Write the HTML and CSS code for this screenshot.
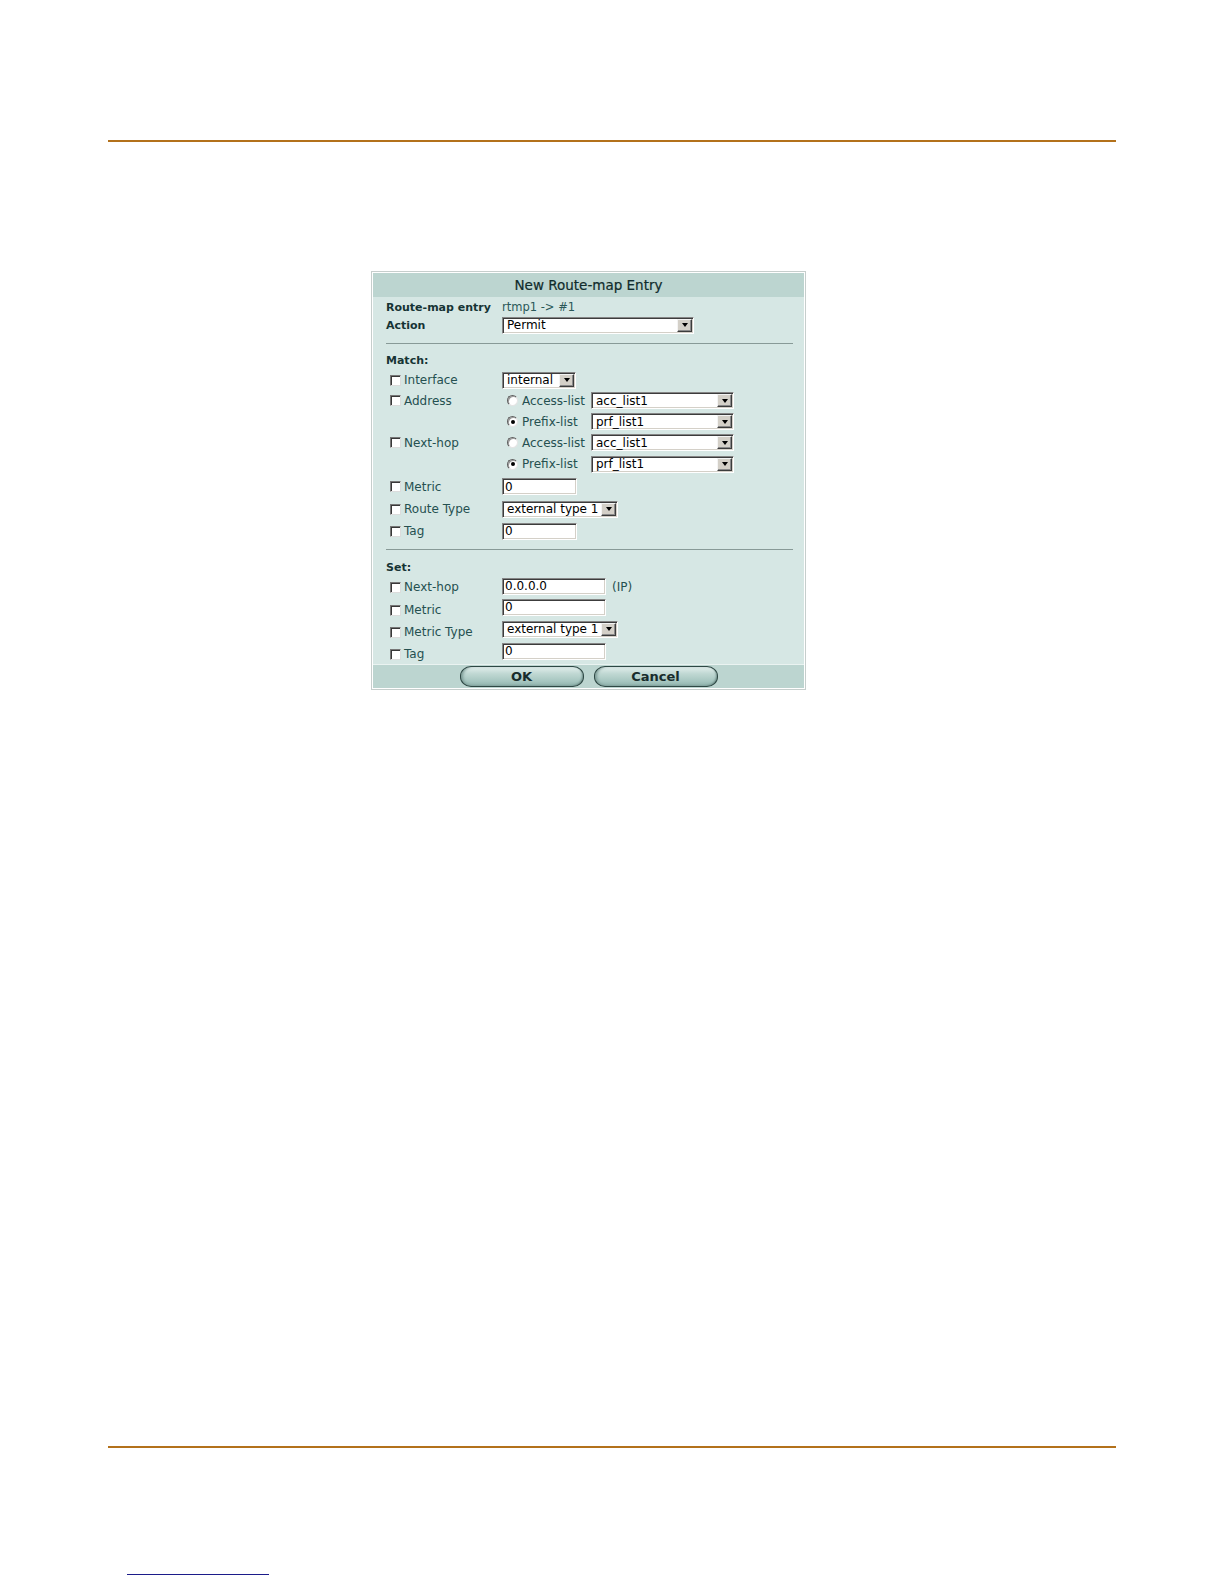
FILE: index.html
```html
<!DOCTYPE html>
<html>
<head>
<meta charset="utf-8">
<title>New Route-map Entry</title>
<link rel="stylesheet" href="styles.css">
</head>
<body>
<div class="page">
  <div class="rule"></div>

  <div class="dialog">
    <div class="title">New Route-map Entry</div>
    <div class="body">
      <div class="row"><span class="lbl b">Route-map entry</span><span class="val">rtmp1 -&gt; #1</span></div>
      <div class="row"><span class="lbl b">Action</span><span class="sel w191"><span class="txt">Permit</span><span class="dd"></span></span></div>

      <div class="sep"></div>
      <div class="head match-head">Match:</div>
      <div class="grid match">
        <span class="lbl"><span class="cb"></span>Interface</span>
        <div class="ctl"><span class="sel w71"><span class="txt">internal</span><span class="dd"></span></span></div>

        <span class="lbl"><span class="cb"></span>Address</span>
        <div class="ctl"><span class="choice"><span class="rb"></span>Access-list</span><span class="sel w142"><span class="txt">acc_list1</span><span class="dd"></span></span></div>

        <span class="lbl"></span>
        <div class="ctl"><span class="choice"><span class="rb"><span class="dot"></span></span>Prefix-list</span><span class="sel w142"><span class="txt">prf_list1</span><span class="dd"></span></span></div>

        <span class="lbl"><span class="cb"></span>Next-hop</span>
        <div class="ctl"><span class="choice"><span class="rb"></span>Access-list</span><span class="sel w142"><span class="txt">acc_list1</span><span class="dd"></span></span></div>

        <span class="lbl"></span>
        <div class="ctl"><span class="choice"><span class="rb"><span class="dot"></span></span>Prefix-list</span><span class="sel w142"><span class="txt">prf_list1</span><span class="dd"></span></span></div>

        <span class="lbl"><span class="cb"></span>Metric</span>
        <div class="ctl"><span class="inp w74">0</span></div>

        <span class="lbl"><span class="cb"></span>Route Type</span>
        <div class="ctl"><span class="sel w115"><span class="txt">external type 1</span><span class="dd"></span></span></div>

        <span class="lbl"><span class="cb"></span>Tag</span>
        <div class="ctl"><span class="inp w74">0</span></div>
      </div>

      <div class="sep"></div>
      <div class="head set-head">Set:</div>
      <div class="grid setg">
        <span class="lbl s1"><span class="cb"></span>Next-hop</span>
        <div class="ctl"><span class="inp w103">0.0.0.0</span><span class="unit s1">(IP)</span></div>

        <span class="lbl s3"><span class="cb"></span>Metric</span>
        <div class="ctl"><span class="inp w103">0</span></div>

        <span class="lbl s3"><span class="cb"></span>Metric Type</span>
        <div class="ctl"><span class="sel w115"><span class="txt">external type 1</span><span class="dd"></span></span></div>

        <span class="lbl s3"><span class="cb"></span>Tag</span>
        <div class="ctl"><span class="inp w103">0</span></div>
      </div>
    </div>
    <div class="footer">
      <span class="btn">OK</span>
      <span class="btn">Cancel</span>
    </div>
  </div>

  <div class="rule bottom"></div>
  <div class="foot-link"></div>
</div>
</body>
</html>
```

FILE: styles.css
```css
* { box-sizing: border-box; }

html, body {
  margin: 0;
  padding: 0;
  background: #ffffff;
}

body {
  font-family: "DejaVu Sans", Verdana, sans-serif;
}

.page {
  padding-top: 140px;
}

.rule {
  height: 2px;
  margin: 0 108px;
  background: #b3711b;
}

.rule.bottom {
  margin-top: 756px;
}

.foot-link {
  width: 142px;
  margin: 126px 0 0 127px;
  border-top: 1px solid #1c1c8a;
}

/* dialog */
.dialog {
  width: 435px;
  margin: 129px 0 0 371px;
  border: 1px solid #c6cecc;
  padding: 1px;
  background: #ffffff;
}

.title {
  height: 24px;
  line-height: 24px;
  background: #bcd5d0;
  text-align: center;
  font-size: 13.5px;
  color: #102c2c;
  -webkit-text-stroke: 0.2px #102c2c;
}

.body {
  background: #d6e7e4;
  padding: 1px 11px 2px 13px;
}

.row {
  display: flex;
  align-items: center;
  height: 18px;
}

.lbl {
  width: 116px;
  flex: none;
  display: flex;
  align-items: center;
  font-size: 12px;
  color: #255050;
  white-space: nowrap;
}

.lbl.b {
  font-weight: bold;
  font-size: 11px;
  color: #163434;
}

/* small downward nudges of label content inside centered cells */
.s1 { padding-top: 2px; }
.s3 { padding-top: 6px; }

.val {
  font-size: 11.5px;
  color: #2a5858;
  white-space: nowrap;
}

.sep {
  margin-top: 9px;
  border-top: 1px solid #889a97;
}

.grid.match + .sep {
  margin-top: 7px;
}

.head {
  font-weight: bold;
  font-size: 11px;
  color: #163434;
}

.match-head {
  margin-top: 8px;
  height: 18px;
  line-height: 18px;
}

.set-head {
  margin-top: 11px;
  height: 15px;
  line-height: 14px;
}

.grid {
  display: grid;
  grid-template-columns: 116px 1fr;
  align-items: center;
}

.match {
  grid-template-rows: 20px 21px 21px 21px 22px 23px 22px 22px;
}

.setg {
  grid-template-rows: 20px 22px 22px 22px;
}

.ctl {
  display: flex;
  align-items: center;
  font-size: 12px;
  color: #255050;
}

/* checkbox & radio */
.cb {
  width: 11px;
  height: 11px;
  flex: none;
  margin: 0 3px 0 4px;
  background: #ffffff;
  border: 1px solid;
  border-color: #767676 #dcdcdc #dcdcdc #767676;
  box-shadow: inset 1px 1px 0 #383838;
}

.choice {
  width: 89px;
  flex: none;
  display: flex;
  align-items: center;
  padding-left: 5px;
  white-space: nowrap;
}

.rb {
  width: 11px;
  height: 11px;
  flex: none;
  margin-right: 4px;
  border-radius: 50%;
  background: #ffffff;
  border: 1px solid;
  border-color: #5e5e5e #e4e4e4 #e4e4e4 #5e5e5e;
  box-shadow: inset 1px 1px 0 #9a9a9a;
  display: flex;
  align-items: center;
  justify-content: center;
}

.rb .dot {
  width: 4px;
  height: 4px;
  border-radius: 50%;
  background: #000000;
}

/* selects & inputs */
.sel,
.inp {
  height: 17px;
  flex: none;
  display: flex;
  align-items: center;
  background: #ffffff;
  border: 1px solid;
  border-color: #858585 #ffffff #ffffff #858585;
  box-shadow: inset 1px 1px 0 #3c3c3c, inset -1px -1px 0 #d4d0c8;
  font-size: 12px;
  color: #000000;
  white-space: nowrap;
  overflow: hidden;
}

.sel {
  padding: 0 1px 0 4px;
}

.inp {
  padding-left: 2px;
}

.sel .txt {
  flex: 1;
  overflow: hidden;
}

.dd {
  width: 15px;
  height: 13px;
  flex: none;
  background: #d4d0c8;
  border: 1px solid;
  border-color: #f4f4f4 #3c3c3c #3c3c3c #f4f4f4;
  box-shadow: inset -1px -1px 0 #8a8a8a;
  display: flex;
  align-items: center;
  justify-content: center;
}

.dd::before {
  content: "";
  border-left: 3.5px solid transparent;
  border-right: 3.5px solid transparent;
  border-top: 4px solid #000000;
}

.w191 { width: 192px; }
.w71 { width: 74px; }
.w142 { width: 143px; }
.w115 { width: 116px; }
.w74 { width: 75px; }
.w103 { width: 104px; }

.unit {
  margin-left: 6px;
  color: #255050;
}

/* footer */
.footer {
  height: 24px;
  background: #bcd5d0;
  border-top: 1px solid #eaf3f1;
  display: flex;
  justify-content: center;
  align-items: center;
  gap: 10px;
}

.btn {
  width: 124px;
  height: 21px;
  border: 1px solid #2e4844;
  border-radius: 11px / 10px;
  background: linear-gradient(#e2eeec 0%, #c0d8d3 35%, #a6c6c0 75%, #8fb2ac 100%);
  box-shadow: inset 3px 0 3px -1px #7d9c97, inset -2px -1px 2px -1px #6f8e89;
  display: flex;
  align-items: center;
  justify-content: center;
  font-weight: bold;
  font-size: 13px;
  color: #182c2c;
}
```
